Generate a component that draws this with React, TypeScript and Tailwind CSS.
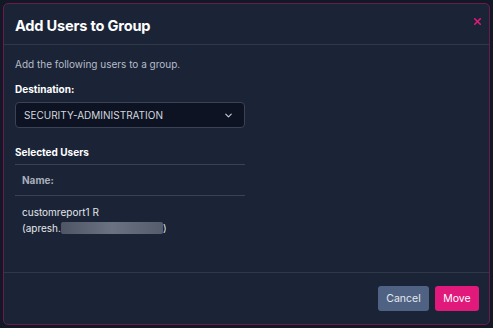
import { ChevronDown, X } from "lucide-react";

export default function App() {
    return (
        <div className="w-[493px] h-[328px] bg-[#121826] p-[3px] font-['Inter',sans-serif]">
            <div className="w-full h-full flex flex-col bg-[#1b2437] border border-[#6a1d4c] rounded-[5px] overflow-hidden">
                {/* Header */}
                <div className="h-[41px] flex items-center justify-between pl-[11px] pr-[6px] border-b border-[#2f3847] shrink-0">
                    <h1 className="pt-[5px] text-[14.6px] font-bold text-white tracking-[-0.2px]">Add Users to Group</h1>
                    <button className="text-[#e0197a] -mt-[6px]">
                        <X className="w-[11px] h-[11px]" strokeWidth={3.5} />
                    </button>
                </div>

                {/* Body */}
                <div className="flex-1 pl-[11px] pt-[12px]">
                    <p className="text-[10px] text-[#b6bcc8] leading-[14px]">Add the following users to a group.</p>

                    <label className="block mt-[11px] text-[10px] font-bold text-white leading-[14px]">Destination:</label>
                    <div className="mt-[6px] w-[230px] h-[26px] flex items-center justify-between bg-[#0d1322] border border-[#3a4353] rounded-[4px] pl-[8px] pr-[10px]">
                        <span className="text-[10px] text-[#d4d8df]">SECURITY-ADMINISTRATION</span>
                        <ChevronDown className="w-[11px] h-[11px] text-[#c8ccd4]" strokeWidth={2.5} />
                    </div>

                    <h2 className="mt-[17px] text-[10px] font-bold text-white leading-[14px]">Selected Users</h2>
                    <div className="mt-[5px] w-[230px] border-t border-[#3a4353]">
                        <div className="h-[31px] flex items-center pl-[7px] border-b border-[#3a4353]">
                            <span className="text-[10px] font-bold text-[#a9afba]">Name:</span>
                        </div>
                        <div className="pl-[7px] pt-[8px] text-[10px] text-[#e3e6eb] leading-[16px]">
                            <div>customreport1 R</div>
                            <div className="flex items-center">
                                (apresh.
                                <span className="inline-block w-[102px] h-[12px] rounded-[2px] bg-gradient-to-r from-[#4e5666] via-[#6b7383] to-[#555d6d]" />
                                )
                            </div>
                        </div>
                    </div>
                </div>

                {/* Footer */}
                <div className="h-[52px] flex items-center justify-end gap-[6px] pr-[10px] border-t border-[#2f3847] shrink-0">
                    <button className="w-[51px] h-[25px] rounded-[3px] bg-[#4f6283] text-[10.5px] text-[#e5e9f0]">Cancel</button>
                    <button className="w-[44px] h-[25px] rounded-[3px] bg-[#e0197a] text-[10.5px] text-white">Move</button>
                </div>
            </div>
        </div>
    );
}
